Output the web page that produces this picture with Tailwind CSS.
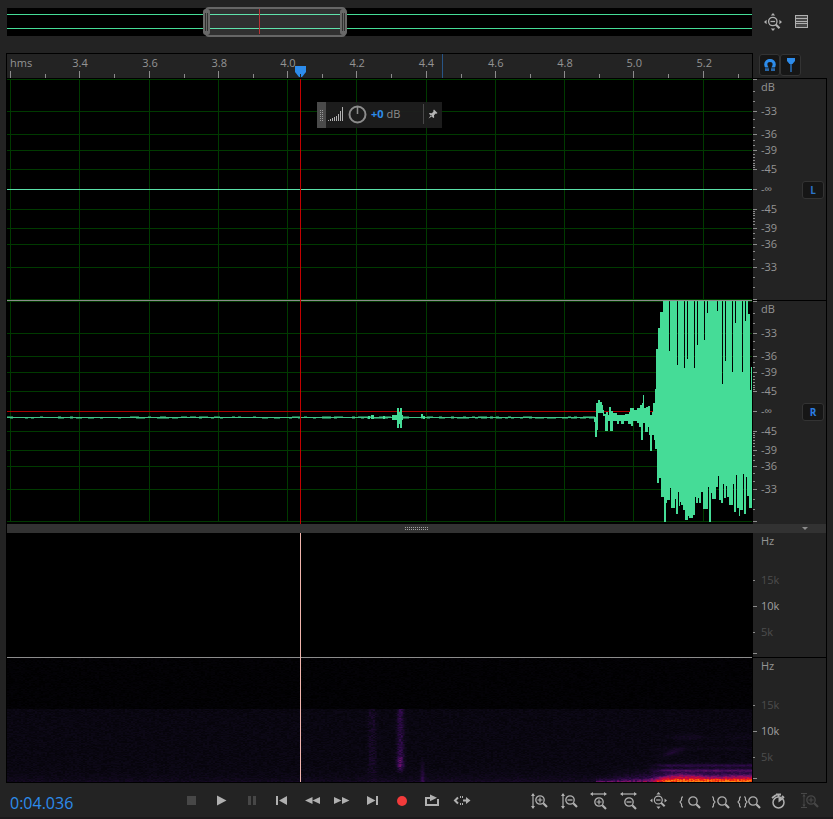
<!DOCTYPE html>
<html lang="en">
<head>
<meta charset="utf-8">
<title>Waveform editor</title>
<script src="https://cdn.jsdelivr.net/npm/@tailwindcss/browser@4"></script>
</head>
<body class="flex min-h-screen flex-col overflow-x-hidden bg-[#232323] font-['Open_Sans','Noto_Sans',sans-serif] text-[11px] font-medium text-[#8c8c8c]">

<!-- Shared icon parts -->
<svg class="hidden" aria-hidden="true">
  <symbol id="lens" viewBox="0 0 14 14" overflow="visible">
    <circle cx="5" cy="5" r="4.2" fill="none" stroke="currentColor" stroke-width="1.3"/>
    <path d="M8.3 8.3L12 12" stroke="currentColor" stroke-width="2.2" fill="none"/>
  </symbol>
  <symbol id="plus" viewBox="0 0 10 10"><path d="M2.5 5h5M5 2.5v5" stroke="currentColor" stroke-width="1.2"/></symbol>
  <symbol id="minus" viewBox="0 0 10 10"><path d="M2.5 5h5" stroke="currentColor" stroke-width="1.3"/></symbol>
  <symbol id="varrow" viewBox="0 0 6 16"><path d="M3 1v14" stroke="currentColor" stroke-width="1.2"/><path d="M3 0L5 3H1zM3 16L5 13H1z" fill="currentColor"/></symbol>
  <symbol id="harrow" viewBox="0 0 17 6"><path d="M1 3h15" stroke="currentColor" stroke-width="1.2"/><path d="M0 3L3 1v4zM17 3L14 1v4z" fill="currentColor"/></symbol>
  <symbol id="lbrace" viewBox="0 0 5 12"><path d="M4 .8Q2.500 .8 2.500 2.500V4L1 6l1.500 2v1.500Q2.500 11.200 4 11.200" fill="none" stroke="currentColor" stroke-width="1.200"/></symbol>
  <symbol id="rbrace" viewBox="0 0 5 12"><path d="M1 .8Q2.500 .8 2.500 2.500V4L4 6 2.500 8v1.500Q2.500 11.200 1 11.200" fill="none" stroke="currentColor" stroke-width="1.200"/></symbol>
  <symbol id="zoomfull" viewBox="0 0 18 18">
    <path d="M9 0l2.200 2.600H6.800zM9 18l2.200-2.600H6.800zM0 9l2.600-2.200v4.400zM18 9l-2.600-2.200v4.400z" fill="currentColor"/>
    <circle cx="8.800" cy="8.500" r="4.200" fill="none" stroke="currentColor" stroke-width="1.300"/>
    <path d="M6.500 8.500h4.600" stroke="currentColor" stroke-width="1.300"/>
    <path d="M11.800 11.500l3.700 3.700" stroke="currentColor" stroke-width="2.200"/>
  </symbol>
</svg>

<!-- Overview -->
<header class="flex pt-2 pl-[7px]">
  <div class="relative h-7 flex-1 bg-black">
    <svg class="absolute -top-1 left-0 h-9 w-full" viewBox="0 0 745 36" preserveAspectRatio="none" aria-label="Session overview">
      <path d="M0 10.500H745M0 24.500H745" stroke="#45dc97"/>
      <rect x="199" y="4" width="139" height="28" rx="3" fill="#303030" stroke="#666" stroke-width="2"/>
      <path d="M203 10.500H334M203 24.500H334" stroke="#5fe3ab"/>
      <path d="M252.500 5V30" stroke="#b83434"/>
      <g fill="#686868"><rect x="196" y="5" width="7" height="26" rx="3"/><rect x="333" y="5" width="7" height="26" rx="3"/></g>
      <path d="M198.500 9V27M200.500 9V27M335.500 9V27M337.500 9V27" stroke="#303030"/>
    </svg>
  </div>
  <div class="flex w-[81px] items-center gap-3 pl-3 text-[#b0b0b0]">
    <button aria-label="Zoom out full"><svg class="size-[18px]"><use href="#zoomfull"/></svg></button>
    <button aria-label="Show list"><svg class="h-[14px] w-[15px]" viewBox="0 0 15 14" shape-rendering="crispEdges"><path d="M1.500 .5h12v12h-12z" fill="#484848" stroke="currentColor"/><path d="M1 3.500h13M1 6.500h13M1 8.500h13" stroke="currentColor"/></svg></button>
  </div>
</header>

<main class="mx-1.5 mt-[17px] flex flex-col">
  <!-- Time ruler -->
  <div class="flex">
    <div class="h-[25px] flex-1 border-x border-t border-black">
      <svg class="block h-6 w-full overflow-visible" aria-label="Time ruler">
        <svg width="100%" height="24" viewBox="0 0 745 24" preserveAspectRatio="none">
          <path stroke="#8c8c8c" d="M3.500 17v7M72.500 17v7M142.500 17v7M211.500 17v7M280.500 17v7M349.500 17v7M419.500 17v7M488.500 17v7M557.500 17v7M626.500 17v7M696.500 17v7"/>
          <path stroke="#8c8c8c" d="M38.500 20v4M107.500 20v4M177.500 20v4M246.500 20v4M315.500 20v4M384.500 20v4M454.500 20v4M523.500 20v4M592.500 20v4M661.500 20v4M731.500 20v4"/>
          <path d="M435.500 0v24" stroke="#285586"/>
          <path d="M288 12h11v6l-4 5h-3l-4-5z" fill="#2d8ceb"/><path d="M293.500 20v4" stroke="#222"/>
        </svg>
        <g fill="#949494" text-anchor="middle">
          <text x="3" y="13" text-anchor="start">hms</text>
          <text x="9.800%" y="13">3.4</text><text x="19.200%" y="13">3.6</text><text x="28.500%" y="13">3.8</text><text x="37.700%" y="13">4.0</text><text x="47%" y="13">4.2</text>
          <text x="56.300%" y="13">4.4</text><text x="65.600%" y="13">4.6</text><text x="74.900%" y="13">4.8</text><text x="84.200%" y="13">5.0</text><text x="93.600%" y="13">5.2</text>
        </g>
      </svg>
    </div>
    <div class="flex w-[74px] pt-px pl-1.5">
      <button aria-label="Snapping" class="flex h-[22px] w-[21px] items-center justify-center rounded-[3px] border border-[#333] bg-[#161616]">
        <svg class="h-3 w-3" viewBox="0 0 12 12"><path d="M3.500 9.500Q1.800 7.500 1.800 5.500A4.200 4 0 0 1 10.200 5.500Q10.200 7.500 8.500 9.500" fill="none" stroke="#2d8ceb" stroke-width="3.200"/><path d="M1 9h4v3H1zM7 9h4v3H7z" fill="#2766a8"/><path d="M0 8.800h5.500M6.500 8.800h5.500" stroke="#161616" stroke-width=".8"/></svg>
      </button>
      <button aria-label="Playhead lock" class="flex h-[22px] w-[21px] items-center justify-center rounded-[3px] border border-[#333] bg-[#161616]">
        <svg class="h-[14px] w-[10px]" viewBox="0 0 10 14"><path d="M5 5v9" stroke="#24588f" stroke-width="2"/><path d="M1 0h8v3L6.500 6h-3L1 3z" fill="#2d8ceb"/></svg>
      </button>
    </div>
  </div>

  <div class="border border-black">
    <!-- Waveforms -->
    <section class="flex" aria-label="Waveform">
      <div class="relative h-[445px] flex-1 border-r border-black bg-black">
        <svg class="block h-full w-full" viewBox="7 79 745 445" preserveAspectRatio="none" shape-rendering="crispEdges">
          <path stroke="#003a00" fill="none" d="M7 79.500H752M7 111.500H752M7 134.500H752M7 150.500H752M7 169.500H752M7 209.500H752M7 228.500H752M7 244.500H752M7 267.500H752M7 299.500H752M7 301.500H752M7 333.500H752M7 356.500H752M7 372.500H752M7 391.500H752M7 431.500H752M7 450.500H752M7 466.500H752M7 489.500H752M7 521.500H752M10.500 79V522M79.500 79V522M149.500 79V522M218.500 79V522M287.500 79V522M356.500 79V522M426.500 79V522M495.500 79V522M564.500 79V522M633.500 79V522M703.500 79V522"/>
          <path d="M7 411.500H752" stroke="#a80000"/>
          <path d="M7 189.500H752" stroke="#5ae0a8"/>
          <path id="quiet" stroke="#1f6a46" fill="none"/>
          <path d="M7 417.500H594" stroke="#40c488"/>
          <path id="wave" fill="#45dc97"/>
          <path d="M7 300.500H752" stroke="#8c8c8c"/>
          <path d="M300.500 79V524" stroke="#c40000"/>
        </svg>
        <!-- Volume HUD -->
        <div class="absolute top-[23px] left-[310px] flex h-[26px] w-[125px] items-center bg-[#1e1e1e]/95">
          <svg class="h-[26px] w-[9px]" viewBox="0 0 9 26" shape-rendering="crispEdges"><path d="M0 0h9v26H0z" fill="#4a4a4a"/><path d="M3.500 8v11M5.500 8v11" stroke="#999" stroke-dasharray="1 1"/></svg>
          <div class="flex flex-1 items-center pb-0.5">
            <svg class="ml-0.5 h-4 w-4" viewBox="0 0 16 16" shape-rendering="crispEdges"><path d="M.5 14v1M2.500 13v2M4.500 12v3M6.500 11v4M8.500 10v5M10.500 8v7M12.500 5v10M14.500 1v14" stroke="#b0b0b0"/></svg>
            <svg class="ml-1 h-5 w-5" viewBox="0 0 20 20"><circle cx="9.500" cy="10.500" r="8" fill="none" stroke="#8c8c8c" stroke-width="2"/><path d="M9.500 3v7" stroke="#8c8c8c" stroke-width="1.500"/></svg>
            <span class="ml-[3px] whitespace-pre"><span class="font-bold text-[#2d8ceb]">+0</span> dB</span>
            <button aria-label="Pin HUD" class="ml-auto flex h-5 w-[19px] items-center justify-center border-l border-[#484848]"><svg class="h-[10px] w-[10px]" viewBox="0 0 10 10"><path d="M6 .5L9.500 4l-1 .7-.8-.2L6 6.300 6.200 8.500 5.300 9 1 4.800l.6-.8 2.200.2L5.500 2.400 5.300 1.300zM3 6L.5 9.500 4.200 7.200z" fill="#b4b4b4"/></svg></button>
          </div>
        </div>
      </div>
      <div class="w-[73px]">
        <div class="flex h-[222px] items-center justify-between border-b border-black pr-[2px]">
          <svg class="h-[221px] w-12" viewBox="0 0 48 221" aria-label="Left channel decibels"><g class="amp"></g></svg>
          <button class="h-[18px] w-[22px] rounded-[3px] border border-[#333] bg-[#161616] text-[10px] leading-4 font-bold text-[#2b74c8]">L</button>
        </div>
        <div class="flex h-[223px] items-start justify-between pr-[2px]">
          <svg class="h-[223px] w-12" viewBox="0 0 48 223" aria-label="Right channel decibels"><g class="amp"></g></svg>
          <button class="mt-[102px] h-[18px] w-[22px] rounded-[3px] border border-[#333] bg-[#161616] text-[10px] leading-4 font-bold text-[#2b7de0]">R</button>
        </div>
      </div>
    </section>

    <!-- Splitter -->
    <div class="relative flex h-[9px] items-center justify-center bg-[#323232]">
      <svg class="h-[3px] w-6" viewBox="0 0 24 3" shape-rendering="crispEdges"><path d="M0 .5h24M0 2.500h24" stroke="#a0a0a0" stroke-dasharray="1 1"/></svg>
      <button aria-label="Collapse" class="absolute right-[18px]"><svg class="block h-[3px] w-[6px]" viewBox="0 0 6 3"><path d="M0 0h6L3 3z" fill="#8c8c8c"/></svg></button>
    </div>

    <!-- Spectrogram -->
    <section class="flex" aria-label="Spectral frequency">
      <div class="relative flex-1 border-r border-black bg-black">
        <div class="h-[125px] border-b border-[#8c8c8c]"></div>
        <canvas id="spectrum" width="745" height="124" class="block h-[124px] w-full"></canvas>
        <svg class="absolute inset-0 h-full w-full" viewBox="0 0 745 249" preserveAspectRatio="none" shape-rendering="crispEdges"><path d="M293.500 0V249" stroke="#f0b4ac"/></svg>
      </div>
      <div class="w-[73px]">
        <div class="h-[125px] border-b border-black"><svg class="block h-[124px] w-full"><g class="hz"></g></svg></div>
        <div class="h-[124px]"><svg class="block h-[124px] w-full"><g class="hz"></g></svg></div>
      </div>
    </section>
  </div>
</main>

<!-- Transport -->
<footer class="flex flex-1 items-center border-b-2 border-[#1c1a1c] pt-0.5 pr-[9px] pl-2.5 text-[#b0b0b0]">
  <output class="w-[166px] pt-1 text-[16px] leading-6 text-[#2d8ceb]">0:04.036</output>
  <div class="flex [&_svg]:block [&_svg]:h-5 [&_svg]:w-[30px]">
    <button aria-label="Stop"><svg viewBox="0 0 30 20"><path d="M11 5h9v9h-9z" fill="#474747"/></svg></button>
    <button aria-label="Play"><svg viewBox="0 0 30 20"><path d="M11 4.500L20.500 9.500 11 14.500z" fill="currentColor"/></svg></button>
    <button aria-label="Pause"><svg viewBox="0 0 30 20"><path d="M12 5h3v9h-3zM17 5h3v9h-3z" fill="#474747"/></svg></button>
    <button aria-label="Go to start"><svg viewBox="0 0 30 20"><path d="M10 5h2v9h-2zM21 5v9l-8-4.500z" fill="currentColor"/></svg></button>
    <button aria-label="Rewind"><svg viewBox="0 0 30 20"><path d="M16.500 6v7L9 9.500zM24 6v7L16.500 9.500z" fill="currentColor"/></svg></button>
    <button aria-label="Fast forward"><svg viewBox="0 0 30 20"><path d="M8 6v7l7.500-3.500zM16 6v7l7.500-3.500z" fill="currentColor"/></svg></button>
    <button aria-label="Go to end"><svg viewBox="0 0 30 20"><path d="M20 5h2v9h-2zM11 5v9l8.500-4.500z" fill="currentColor"/></svg></button>
    <button aria-label="Record"><svg viewBox="0 0 30 20"><circle cx="16" cy="10" r="5" fill="#f23b3b"/></svg></button>
    <button aria-label="Loop"><svg viewBox="0 0 30 20"><path d="M14 7h-4v7h12V8" fill="none" stroke="currentColor" stroke-width="2"/><path d="M14 3.500l7 3.300-7 3.400z" fill="currentColor"/></svg></button>
    <button aria-label="Skip selection"><svg viewBox="0 0 30 20"><path d="M12 6.500L9 9.500l3 3" fill="none" stroke="currentColor" stroke-width="2"/><path d="M20 6l4.500 3.500L20 13z" fill="currentColor"/><path d="M17 9.500h4" stroke="currentColor" stroke-width="2"/><path d="M14.500 5v2M14.500 12v2M16.500 5v2M16.500 12v2" stroke="currentColor" stroke-width="1"/></svg></button>
  </div>
  <div class="ml-auto flex [&>button>svg]:block [&>button>svg]:h-5 [&>button>svg]:w-[30px]">
    <button aria-label="Zoom in amplitude"><svg viewBox="0 0 30 20"><use href="#varrow" x="6" y="2" width="6" height="16"/><use href="#lens" x="11" y="4" width="14" height="14"/><use href="#plus" x="11" y="4" width="10" height="10"/></svg></button>
    <button aria-label="Zoom out amplitude"><svg viewBox="0 0 30 20"><use href="#varrow" x="6" y="2" width="6" height="16"/><use href="#lens" x="11" y="4" width="14" height="14"/><use href="#minus" x="11" y="4" width="10" height="10"/></svg></button>
    <button aria-label="Zoom in time"><svg viewBox="0 0 30 20"><use href="#harrow" x="6" y="0" width="17" height="6"/><use href="#lens" x="10" y="6" width="14" height="14"/><use href="#plus" x="10" y="6" width="10" height="10"/></svg></button>
    <button aria-label="Zoom out time"><svg viewBox="0 0 30 20"><use href="#harrow" x="6" y="0" width="17" height="6"/><use href="#lens" x="10" y="6" width="14" height="14"/><use href="#minus" x="10" y="6" width="10" height="10"/></svg></button>
    <button aria-label="Zoom out full"><svg viewBox="0 0 30 20"><use href="#zoomfull" x="6" y="1" width="17" height="17"/></svg></button>
    <button aria-label="Zoom in at in point"><svg viewBox="0 0 30 20"><use href="#lbrace" x="5" y="5" width="5" height="12"/><use href="#lens" x="14" y="5" width="14" height="14"/></svg></button>
    <button aria-label="Zoom in at out point"><svg viewBox="0 0 30 20"><use href="#rbrace" x="7" y="5" width="5" height="12"/><use href="#lens" x="13" y="5" width="14" height="14"/></svg></button>
    <button aria-label="Zoom to selection"><svg viewBox="0 0 30 20"><use href="#lbrace" x="3" y="5" width="5" height="12"/><use href="#rbrace" x="9" y="5" width="5" height="12"/><use href="#lens" x="14" y="5" width="14" height="14"/></svg></button>
    <button aria-label="Zoom to time"><svg viewBox="0 0 30 20"><circle cx="14.500" cy="11.500" r="5.500" fill="none" stroke="currentColor" stroke-width="1.500"/><path d="M14.500 11.500V6.500a5 5 0 0 1 4 2z" fill="currentColor"/><path d="M12 3.500h5M14.500 3v3M8 7l4-3M18 5l2 2" stroke="currentColor" stroke-width="1.800"/></svg></button>
    <button aria-label="Reset zoom" disabled class="text-[#474747]"><svg viewBox="0 0 30 20"><path d="M7 2.500h6M7 16.500h6" stroke="currentColor"/><use href="#varrow" x="7" y="3" width="6" height="13"/><use href="#lens" x="12" y="4" width="14" height="14"/><use href="#plus" x="12" y="4" width="10" height="10"/></svg></button>
  </div>
</footer>

<script>
// Decibel scale, mirrored around the centre line
const amp = '<path stroke="#8c8c8c" shape-rendering="crispEdges" d="' +
  [0, 32, 55, 71, 90, 110, 130, 149, 165, 188, 220].map(y => `M0 ${y + .5}h4`).join('') +
  [12, 22, 40, 48, 61, 66, 75, 78, 81, 84, 86, 88, 132, 134, 136, 139, 142, 145, 154, 159, 172, 180, 198, 208].map(y => `M0 ${y + .5}h2`).join('') + '"/>' +
  [[8, 'dB'], [32, '-33'], [55, '-36'], [71, '-39'], [90, '-45'], [110, '-∞'], [130, '-45'], [149, '-39'], [165, '-36'], [188, '-33']]
    .map(([y, t]) => `<text x="8" y="${y + 4}" fill="#949494">${t}</text>`).join('');
document.querySelectorAll('.amp').forEach(g => g.innerHTML = amp);

// Frequency scale
const hz = '<path stroke="#8c8c8c" shape-rendering="crispEdges" d="M0 47.5h2M0 73.5h4M0 99.5h2M0 120.5h4"/>' +
  '<text x="8" y="12" fill="#949494">Hz</text><text x="8" y="51" fill="#4d4d4d">15k</text><text x="8" y="77" fill="#a0a0a0">10k</text><text x="8" y="103" fill="#4d4d4d">5k</text>';
document.querySelectorAll('.hz').forEach(g => g.innerHTML = hz);

let seed = 7;
const rnd = () => (seed = (seed * 16807) % 2147483647) / 2147483647;

// Right channel envelope: x,y steps; each y holds until the next x
const upper = '594,417 596,403 598,400 600,402 602,405 603,410 604,414 606,412 608,415 609,407 611,411 613,413 617,415 625,414 629,412 630,408 634,410 637,408 640,405 642,403 643,395 644,408 646,407 648,406 650,415 652,412 653,403 655,389 656,349 658,328 660,312 663,301 669,351 670,301 677,365 678,301 684,368 685,301 687,359 688,301 694,368 695,301 697,345 698,301 704,340 705,301 707,313 708,301 717,311 718,301 722,384 723,301 725,361 726,301 732,372 733,301 735,323 736,301 742,372 743,301 745,321 746,301 748,314 750,390 751,367';
const lower = '594,422 595,437 597,430 598,413 603,416 605,431 608,421 610,431 613,421 617,424 619,421 621,424 624,421 628,424 631,426 633,421 637,423 639,427 641,440 643,423 645,432 648,427 649,435 650,451 652,435 654,440 655,449 657,483 659,478 661,497 664,522 666,503 667,500 670,488 671,508 675,499 676,514 678,492 679,506 680,502 681,505 683,510 685,520 688,516 689,518 693,515 695,497 696,503 698,498 699,503 701,492 703,509 708,487 709,522 711,493 712,499 716,487 718,476 719,500 721,503 723,484 724,498 726,486 727,497 729,505 733,484 734,512 736,475 737,508 739,516 740,510 743,474 744,514 746,477 747,496 749,508';
const parse = s => s.split(' ').map(p => p.split(',').map(Number));
const T = parse(upper), B = parse(lower);
let d = 'M594 417';
T.forEach(([x, y]) => d += `H${x}V${y}`);
d += 'H752';
for (let i = B.length - 1; i >= 0; i--) d += `V${B[i][1]}H${B[i][0]}`;
d += 'Z';
// Small transients in the quiet part
[[368, 416, 2, 3], [371, 415, 3, 4], [383, 416, 2, 3], [392, 415, 5, 5], [397, 408, 2, 20], [399, 412, 1, 12], [400, 408, 2, 20], [402, 415, 1, 5], [421, 414, 2, 4], [423, 416, 2, 3]]
  .forEach(([x, y, w, h]) => d += `M${x} ${y}h${w}v${h}h${-w}z`);
document.getElementById('wave').setAttribute('d', d);

let q = '';
for (let x = 7; x < 594; x += 3) {
  const p = x > 360 ? .55 : .3;
  if (rnd() < p) q += `M${x} 416.5h3`;
  if (rnd() < p) q += `M${x} 418.5h3`;
}
document.getElementById('quiet').setAttribute('d', q);

// Spectrogram
const stops = [[0, 0, 0, 0], [.1, 12, 8, 22], [.3, 48, 10, 76], [.5, 118, 18, 108], [.68, 200, 8, 62], [.84, 245, 40, 10], [1, 255, 130, 20]];
const colour = v => {
  v = Math.max(0, Math.min(1, v));
  let i = 1;
  while (stops[i][0] < v) i++;
  const a = stops[i - 1], b = stops[i], t = (v - a[0]) / (b[0] - a[0]);
  return [1, 2, 3].map(k => a[k] + (b[k] - a[k]) * t);
};
const bump = (v, c, w) => Math.exp(-Math.pow((v - c) / w, 2));
const ctx = document.getElementById('spectrum').getContext('2d');
const img = ctx.createImageData(745, 124);
for (let y = 0; y < 124; y++) {
  let n = 0;
  for (let x = 0; x < 745; x++) {
    if (x % 2 === 0) n = rnd();
    let v = y < 51 ? n * .035 : .045 + n * .06;
    if (y >= 51) {
      const f = 123 - y;
      v += .07 * Math.exp(-f / 5) * (x > 350 ? 1 : .7);
      v += .07 * (.5 + n) * (bump(x, 366, 3) + bump(x, 362, 2) * .6) * (y < 115 ? 1 : .3);
      v += (.2 + .16 * bump(y, 105, 8)) * (.6 + n * .6) * bump(x, 393, 3.5) * (y < 108 ? 1 : Math.max(0, 1 - (y - 108) / 8));
      v += .2 * bump(x, 415, 2) * Math.max(0, 1 - f / 26);
      const on = Math.max(0, Math.min(1, (x - 588) / 65));
      if (x > 588) v += (.25 + .15 * on) * Math.exp(-f / (1.5 + 4 * on)) * (.7 + n * .5);
      if (x > 640) {
        const k = Math.min(1, (x - 640) / 20);
        const hump = 4.5 + 3 * bump(x, 678, 18) + 1.5 * bump(x, 735, 25);
        v += k * (.3 * Math.exp(-Math.pow(f / hump, 4)) + .2 * bump(f, 11, 1.5) + .16 * bump(f, 16, 1.5) + .1 * bump(f, 6, 6));
        if (f < 3) v += .13 * k * (x % 3 ? 1 : .5);
        v += .06 * bump(f, 44, 3) * k * (bump(x, 680, 18) + bump(x, 735, 18) * .5) + .03 * bump(f, 33, 2) * k;
        v += .12 * bump(x, 665, 10) * bump(f, 29 + (x - 665) / 4, 3);
      }
    }
    const c = colour(v), o = (y * 745 + x) * 4;
    img.data[o] = c[0]; img.data[o + 1] = c[1]; img.data[o + 2] = c[2]; img.data[o + 3] = 255;
  }
}
ctx.putImageData(img, 0, 0);
</script>
</body>
</html>
